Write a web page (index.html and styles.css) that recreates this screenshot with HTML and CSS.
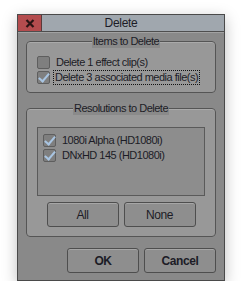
FILE: index.html
```html
<!DOCTYPE html>
<html lang="en">
<head>
    <meta charset="UTF-8">
    <title>Delete</title>
    <link rel="stylesheet" href="styles.css">
</head>
<body>
    <div class="window">
        <div class="titlebar">
            <div class="close-btn">
                <svg width="10" height="9" viewBox="0 0 10 9"><path d="M1.5 1 L8.5 8 M8.5 1 L1.5 8" stroke="#2a1414" stroke-width="2.2"/></svg>
            </div>
            <div class="title">Delete</div>
        </div>

        <div class="content">
            <fieldset class="group items-group">
                <legend>Items to Delete</legend>
                <label class="check-row">
                    <span class="check"></span>
                    <span class="check-label">Delete 1 effect clip(s)</span>
                </label>
                <label class="check-row">
                    <span class="check checked"></span>
                    <span class="check-label focused">Delete 3 associated media file(s)</span>
                </label>
            </fieldset>

            <fieldset class="group res-group">
                <legend>Resolutions to Delete</legend>
                <div class="list-box">
                    <div class="check-row">
                        <span class="check checked"></span>
                        <span class="check-label">1080i Alpha (HD1080i)</span>
                    </div>
                    <div class="check-row">
                        <span class="check checked"></span>
                        <span class="check-label">DNxHD 145 (HD1080i)</span>
                    </div>
                </div>
                <div class="button-row">
                    <button class="btn">All</button>
                    <button class="btn">None</button>
                </div>
            </fieldset>

            <div class="dialog-buttons">
                <button class="btn btn-bold">OK</button>
                <button class="btn btn-bold">Cancel</button>
            </div>
        </div>
    </div>
</body>
</html>
```

FILE: styles.css
```css
body {
    margin: 0;
    background-color: #fff;
    font-family: "Liberation Sans", Arial, sans-serif;
    font-size: 11px;
    letter-spacing: -0.5px;
    color: #1c1c26;
}

.window {
    width: 206px;
    height: 265px;
    margin: 14px 0 0 17px;
    border: 1px solid #4a4a4a;
    background-color: #898989;
    box-shadow: 0 4px 14px rgba(0, 0, 0, 0.25);
    display: flex;
    flex-direction: column;
}

.titlebar {
    display: flex;
    height: 16px;
    border-bottom: 1px solid #4e4e4e;
}

.close-btn {
    width: 23px;
    background-color: #b44c4e;
    border-right: 1px solid #5a3a3a;
    display: flex;
    align-items: center;
    justify-content: center;
}

.title {
    flex: 1;
    background-color: #a0a7ae;
    text-align: center;
    line-height: 16px;
    font-size: 12px;
    letter-spacing: -0.3px;
    padding-right: 24px;
}

.content {
    padding: 2px 8px 0 8px;
    border-top: 1px solid #a2a2a2;
}

.group {
    box-sizing: border-box;
    margin: 0;
    border: 1px solid #555;
    border-radius: 4px;
    background-color: #989898;
    box-shadow: inset 0 1px 0 #aaa;
    min-width: 0;
}

.group legend {
    margin: 0 auto;
    padding: 0 1px;
    background-color: #8a8a8a;
    line-height: 13px;
}

.items-group {
    height: 58px;
    padding: 7px 0 0 10px;
}

.res-group {
    height: 135px;
    margin-top: 9px;
    padding: 12px 10px 0 10px;
}

.check-row {
    display: flex;
    align-items: center;
    height: 15px;
    white-space: nowrap;
}

.check {
    flex: none;
    width: 11px;
    height: 11px;
    border: 1px solid #5e5e5e;
    border-radius: 2px;
    background-color: #7f7f7f;
    margin-right: 5px;
    position: relative;
}

.check.checked::after {
    content: "";
    position: absolute;
    left: 3px;
    top: -1px;
    width: 4px;
    height: 9px;
    border-right: 2px solid #a9c5e2;
    border-bottom: 2px solid #a9c5e2;
    transform: rotate(40deg);
}

.check-label {
    padding: 0 1px;
    line-height: 13px;
}

.focused {
    outline: 1px dotted #111;
    margin-left: -1px;
}

.list-box {
    box-sizing: border-box;
    height: 69px;
    border: 1px solid #5a5a5a;
    background-color: #8d8d8d;
    padding: 5px 0 0 5px;
}

.button-row {
    display: flex;
    justify-content: center;
    gap: 5px;
    margin-top: 6px;
}

.btn {
    width: 72px;
    height: 25px;
    border: 1px solid #4e4e4e;
    border-radius: 3px;
    background-color: #8e8e8e;
    box-shadow: inset 0 1px 0 #a6a6a6;
    font-family: "Liberation Sans", Arial, sans-serif;
    font-size: 12px;
    letter-spacing: -0.4px;
    color: #1c1c26;
    padding: 0;
}

.btn-bold {
    font-weight: bold;
}

.dialog-buttons {
    display: flex;
    justify-content: flex-end;
    gap: 5px;
    margin-top: 11px;
}
```
